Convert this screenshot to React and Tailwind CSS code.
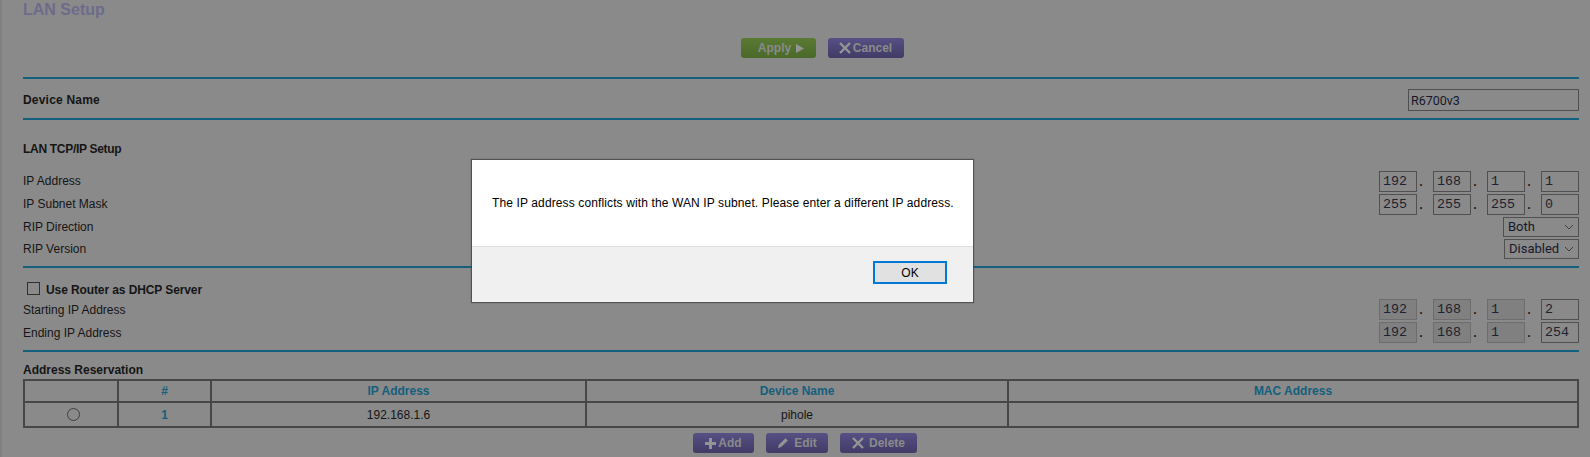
function Line({ className = "" }) {
  return <div className={`h-[2px] bg-[#145f7d] ${className}`} />;
}

function Octet({ value, dimmed }) {
  const tone = dimmed
    ? "border-[#6d6d6d] bg-[#808080]"
    : "border-[#505050] bg-[#8a8a8a]";
  return (
    <input
      readOnly
      value={value}
      className={`w-[38px] h-full border ${tone} pl-[3px] text-[#1d2230] text-[13.33px] outline-none font-['Liberation_Mono',monospace]`}
    />
  );
}

function IpInputs({ values, dimmedCount = 0 }) {
  return (
    <div className="flex h-full">
      {values.map((value, index) => (
        <div key={index} className="flex h-full">
          {index > 0 && (
            <span className="w-[16px] flex items-center pt-[2px] text-[13.33px] text-[#111] font-['Liberation_Mono',monospace]">
              .
            </span>
          )}
          <Octet value={value} dimmed={index < dimmedCount} />
        </div>
      ))}
    </div>
  );
}

function Row({ label, className = "", labelClass = "-mt-[2px]", children }) {
  return (
    <div className={`flex items-center justify-between ${className}`}>
      <span className={`text-[#151515] ${labelClass}`}>{label}</span>
      {children}
    </div>
  );
}

function FakeSelect({ value, className = "" }) {
  return (
    <div className={`h-full border border-[#505050] pl-[4px] pr-[4px] flex items-center justify-between text-[13px] text-[#16192a] font-['Roboto',sans-serif] ${className}`}>
      <span>{value}</span>
      <svg width="10" height="6" viewBox="0 0 10 6" fill="none" stroke="#3f3f3f" strokeWidth="1">
        <path d="M1 1l4 4 4-4" />
      </svg>
    </div>
  );
}

function ActionButton({ icon, label, width, gap = "gap-[2px]", className = "from-[#565085] to-[#413b66]", textClass = "" }) {
  return (
    <div className={`${width} h-[20px] rounded-[3px] bg-gradient-to-b ${className} flex items-center justify-center ${gap} text-[#8a8a8a] font-bold ${textClass}`}>
      {icon}
      <span>{label}</span>
    </div>
  );
}

const crossIcon = (
  <svg width="12" height="12" viewBox="0 0 12 12" stroke="#949494" strokeWidth="2.4" fill="none">
    <path d="M1 1l10 10M11 1L1 11" />
  </svg>
);

const plusIcon = (
  <svg width="11" height="11" viewBox="0 0 11 11" stroke="#949494" strokeWidth="3" fill="none">
    <path d="M5.5 0v11M0 5.5h11" />
  </svg>
);

const pencilIcon = (
  <svg width="12" height="12" viewBox="0 0 12 12" fill="#949494">
    <path d="M8.5 1.2l2.3 2.3-6.6 6.6L1 11l.9-3.2z" />
  </svg>
);

const playIcon = (
  <svg width="8" height="9" viewBox="0 0 8 9" fill="#949494">
    <path d="M0 0l8 4.5L0 9z" />
  </svg>
);

function ReservationTable() {
  const cell = "border-2 border-[#474747] text-center p-0";
  return (
    <table className="w-full table-fixed border-collapse">
      <colgroup>
        <col className="w-[94px]" />
        <col className="w-[93px]" />
        <col className="w-[375px]" />
        <col className="w-[422px]" />
        <col />
      </colgroup>
      <thead>
        <tr className="h-[22px] text-[#145f7d] font-bold">
          <th className={cell}></th>
          <th className={cell}>#</th>
          <th className={cell}>IP Address</th>
          <th className={cell}>Device Name</th>
          <th className={cell}>MAC Address</th>
        </tr>
      </thead>
      <tbody>
        <tr className="h-[25px] text-[#151515]">
          <td className={`${cell} pl-[4px]`}>
            <div className="mx-auto w-[13px] h-[13px] rounded-full border border-[#3f3f3f]" />
          </td>
          <td className={`${cell} text-[#145f7d] font-bold`}>1</td>
          <td className={cell}>192.168.1.6</td>
          <td className={cell}>pihole</td>
          <td className={cell}></td>
        </tr>
      </tbody>
    </table>
  );
}

function AlertDialog() {
  return (
    <div className="absolute left-[470px] top-[160px] w-[501px] h-[142px] flex flex-col bg-white shadow-[0_0_1px_1px_rgba(60,60,60,0.7)] text-black">
      <div className="h-[87px] pl-[20px] pt-[35px] text-[12px] tracking-[0.12px] leading-[16px] border-b border-[#dfdfdf]">
        The IP address conflicts with the WAN IP subnet. Please enter a different IP address.
      </div>
      <div className="flex-1 bg-[#f0f0f0] flex justify-end pt-[14px] pr-[26px]">
        <div className="w-[74px] h-[23px] border-2 border-[#0078d7] bg-[#e1e1e1] flex items-center justify-center text-[12px]">
          OK
        </div>
      </div>
    </div>
  );
}

export default function App() {
  return (
    <div className="relative h-[457px] overflow-hidden bg-[#8a8a8a] border-l-2 border-[#808080] pl-[21px] pr-[11px] text-[12px] leading-[14px] font-['Liberation_Sans',Arial,sans-serif]">
      <h1 className="h-[38px] pt-[1px] text-[16px] leading-[18px] font-bold text-[#6e6a8b]">LAN Setup</h1>

      <div className="h-[20px] flex justify-center gap-[12px] pl-[42px]">
        <ActionButton
          icon={<span className="order-2 ml-[5px]">{playIcon}</span>}
          label="Apply"
          width="w-[75px]"
          gap="gap-0"
          className="from-[#597a33] to-[#4b692a]"
          textClass="pl-[6px]"
        />
        <ActionButton icon={crossIcon} label="Cancel" width="w-[76px]" />
      </div>

      <Line className="mt-[19px]" />
      <Row label={<b className="tracking-[0.2px]">Device Name</b>} labelClass="" className="mt-[10px] h-[22px]">
        <input
          readOnly
          value="R6700v3"
          className="w-[171px] h-full border border-[#505050] bg-[#8a8a8a] pl-[2px] text-[12.5px] text-[#16192a] outline-none font-['Roboto',sans-serif]"
        />
      </Row>
      <Line className="mt-[7px]" />

      <h2 className="mt-[22px] font-bold text-[#151515] tracking-[-0.3px]">LAN TCP/IP Setup</h2>

      <div className="mt-[15px] flex flex-col">
        <Row label="IP Address" className="h-[21px]">
          <IpInputs values={["192", "168", "1", "1"]} />
        </Row>
        <Row label="IP Subnet Mask" className="h-[21px] mt-[2px]">
          <IpInputs values={["255", "255", "255", "0"]} />
        </Row>
        <Row label="RIP Direction" labelClass="" className="h-[20px] mt-[2px]">
          <FakeSelect value="Both" className="w-[76px]" />
        </Row>
        <Row label="RIP Version" labelClass="" className="h-[20px] mt-[2px]">
          <FakeSelect value="Disabled" className="w-[75px]" />
        </Row>
      </div>

      <Line className="mt-[7px]" />

      <label className="mt-[12px] h-[18px] flex items-center font-bold text-[#151515] tracking-[-0.1px]">
        <span className="ml-[4px] mr-[6px] -mt-[2px] w-[13px] h-[13px] border border-[#303030]" />
        <span className="mt-[2px]">Use Router as DHCP Server</span>
      </label>

      <div className="mt-[1px] flex flex-col">
        <Row label="Starting IP Address" labelClass="" className="h-[21px]">
          <IpInputs values={["192", "168", "1", "2"]} dimmedCount={3} />
        </Row>
        <Row label="Ending IP Address" labelClass="" className="h-[21px] mt-[2px]">
          <IpInputs values={["192", "168", "1", "254"]} dimmedCount={3} />
        </Row>
      </div>

      <Line className="mt-[7px]" />

      <h2 className="mt-[11px] font-bold text-[#151515]">Address Reservation</h2>
      <div className="mt-[2px]">
        <ReservationTable />
      </div>

      <div className="mt-[5px] flex justify-center gap-[12px] pl-[8px]">
        <ActionButton icon={plusIcon} label="Add" width="w-[61px]" />
        <ActionButton icon={pencilIcon} label="Edit" width="w-[62px]" gap="gap-[5px]" />
        <ActionButton icon={crossIcon} label="Delete" width="w-[77px]" gap="gap-[5px]" />
      </div>

      <AlertDialog />
    </div>
  );
}
